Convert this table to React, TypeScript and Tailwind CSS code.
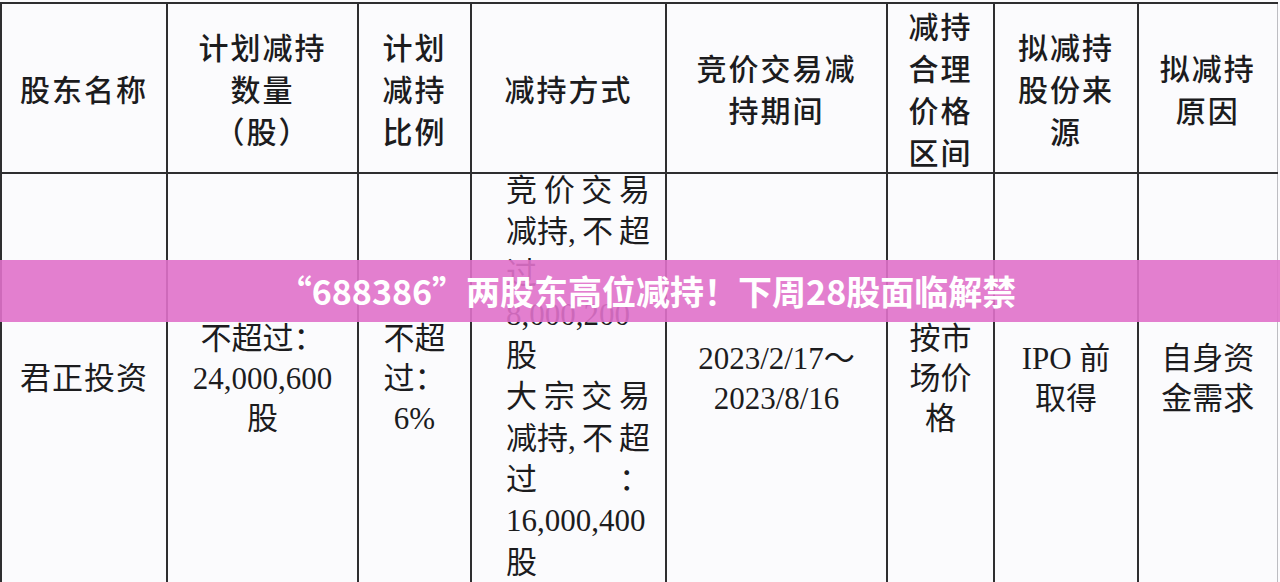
import React from 'react';

const headFont = { fontFamily: '"Noto Sans CJK SC", sans-serif' };
const bodyFont = { fontFamily: '"Liberation Serif", "Noto Sans CJK SC", serif' };

const headers: string[][] = [
  ['股东名称'],
  ['计划减持', '数量', '（股）'],
  ['计划', '减持', '比例'],
  ['减持方式'],
  ['竞价交易减', '持期间'],
  ['减持', '合理', '价格', '区间'],
  ['拟减持', '股份来', '源'],
  ['拟减持', '原因'],
];

// each entry: [text, justified]
const methodLines: [string, boolean][] = [
  ['竞价交易', true],
  ['减持,不超', true],
  ['过', false],
  ['8,000,200', false],
  ['股', false],
  ['大宗交易', true],
  ['减持,不超', true],
  ['过：', true],
  ['16,000,400', false],
  ['股', false],
];

function Lines({ lines }: { lines: string[] }) {
  return (
    <>
      {lines.map((l, i) => (
        <div key={i}>{l}</div>
      ))}
    </>
  );
}

const cell = 'border-2 border-[#2e2e30] text-center align-middle p-0';

export default function App() {
  return (
    <div className="relative w-[1280px] h-[582px] overflow-hidden bg-[#fbfbfd] text-[#1c1c1e]">
      <table className="table-fixed border-collapse w-[1276px] mt-[2px]">
        <colgroup>
          <col className="w-[166px]" />
          <col className="w-[191px]" />
          <col className="w-[113px]" />
          <col className="w-[195px]" />
          <col className="w-[221px]" />
          <col className="w-[107px]" />
          <col className="w-[144px]" />
          <col className="w-[139px]" />
        </colgroup>
        <thead>
          <tr className="h-[169px]">
            {headers.map((h, i) => (
              <th
                key={i}
                className={`${cell} font-medium text-[30px] leading-[42px] tracking-[2px] ${i === 7 ? 'border-r-[#bdbdc2] border-r' : ''}`}
                style={headFont}
              >
                <Lines lines={h} />
              </th>
            ))}
          </tr>
        </thead>
        <tbody style={bodyFont} className="text-[31px] leading-[40px]">
          <tr className="h-[412px]">
            <td className={`${cell} tracking-[1px]`}>君正投资</td>
            <td className={cell}>
              <Lines lines={['不超过：', '24,000,600', '股']} />
            </td>
            <td className={cell}>
              <Lines lines={['不超', '过：', '6%']} />
            </td>
            <td className={`${cell} align-top text-left`}>
              <div className="ml-[34px] w-[144px] -mt-[4px] leading-[41.3px]">
                {methodLines.map(([t, j], i) =>
                  j ? (
                    <div key={i} className="flex justify-between">
                      {(t === '过：' ? ['过', '：'] : t === '减持,不超' ? ['减持,', '不', '超'] : t.split('')).map(
                        (c, k) => (
                          <span key={k}>{c}</span>
                        )
                      )}
                    </div>
                  ) : (
                    <div key={i}>{t}</div>
                  )
                )}
              </div>
            </td>
            <td className={cell}>
              <Lines lines={['2023/2/17～', '2023/8/16']} />
            </td>
            <td className={cell}>
              <Lines lines={['按市', '场价', '格']} />
            </td>
            <td className={cell}>
              <Lines lines={['IPO 前', '取得']} />
            </td>
            <td className={`${cell} border-r border-r-[#bdbdc2]`}>
              <Lines lines={['自身资', '金需求']} />
            </td>
          </tr>
        </tbody>
      </table>

      <div className="absolute left-0 right-0 top-[260px] h-[62px] flex items-center justify-center bg-[#e071ca]/90">
        <span
          className="text-white font-bold text-[34px] leading-none pl-[14px]"
          style={headFont}
        >
          “688386”两股东高位减持！下周28股面临解禁
        </span>
      </div>
    </div>
  );
}
